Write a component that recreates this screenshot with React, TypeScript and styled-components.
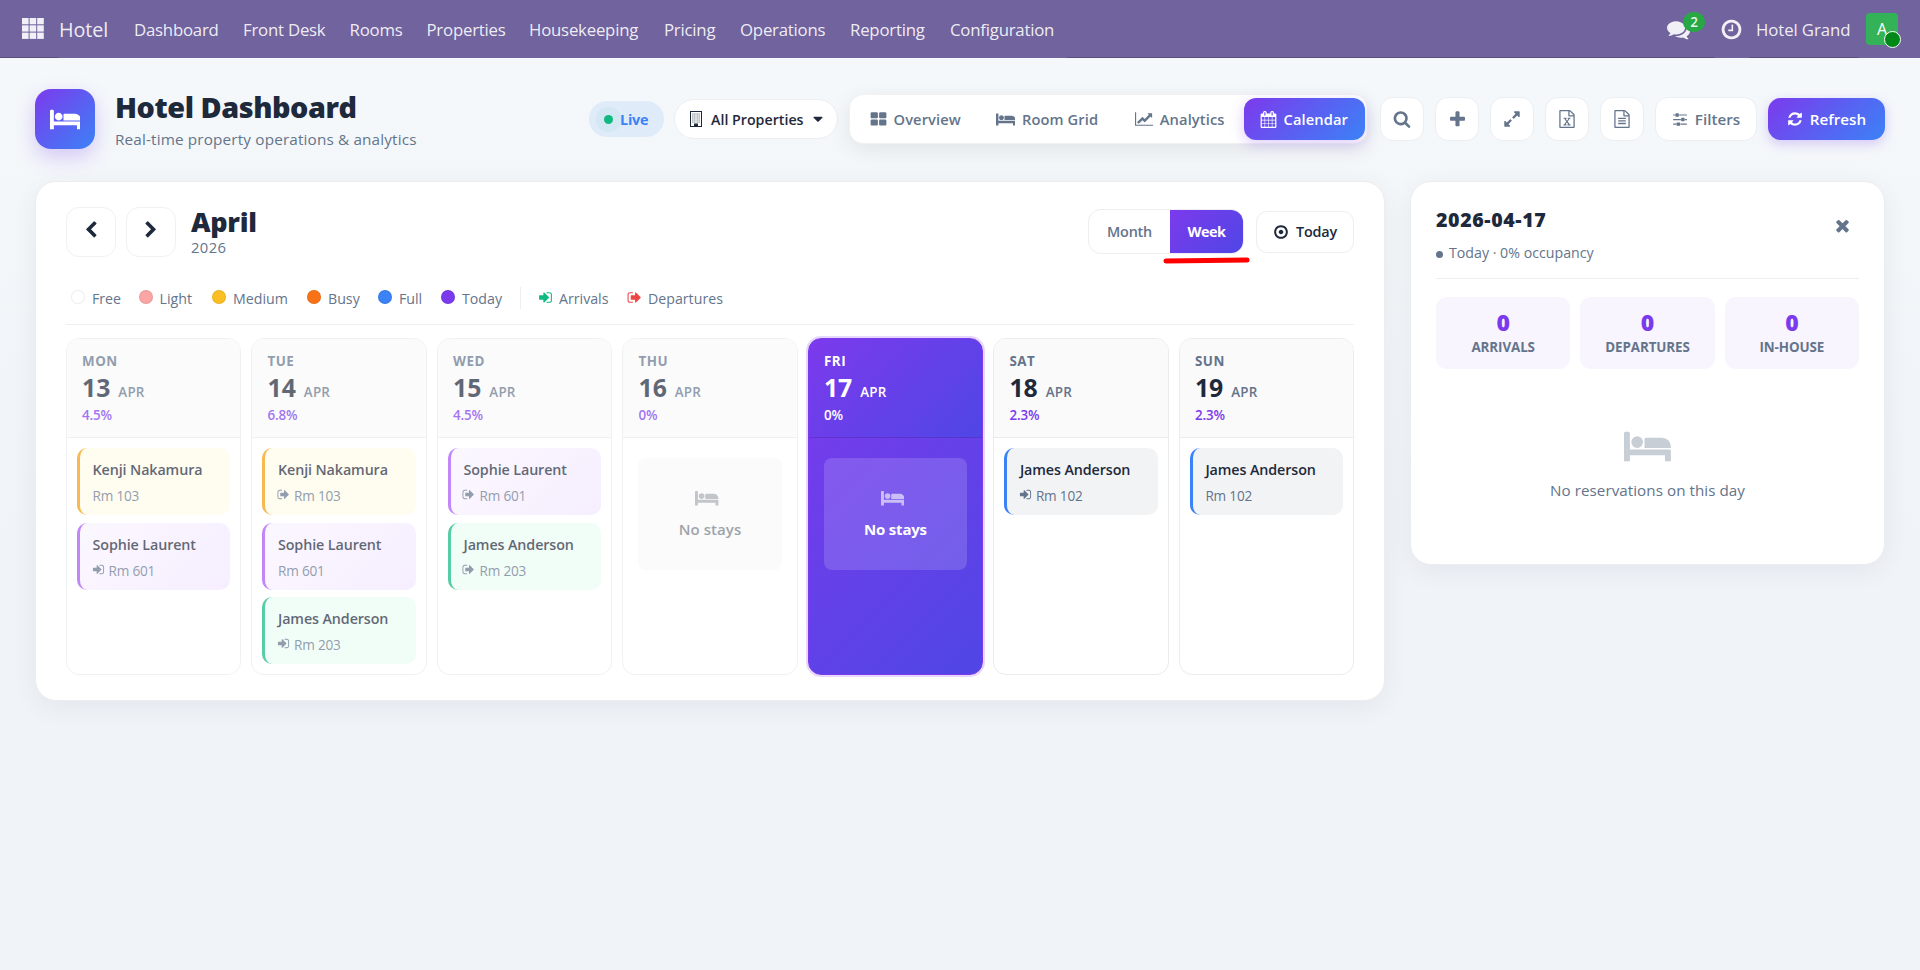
import React, { useState } from 'react';
import styled, { createGlobalStyle, css } from 'styled-components';

/* ---------- icons ---------- */

const filePage =
  'M1596 380q28 28 48 76t20 88v1152q0 40-28 68t-68 28h-1344q-40 0-68-28t-28-68v-1600q0-40 28-68t68-28h896q40 0 88 20t76 48zm-444-244v376h376q-10-29-22-41l-313-313q-12-12-41-22zm384 1528v-1024h-416q-40 0-68-28t-28-68v-416h-768v1536h1280z';

const icons = {
  bed: 'M256 1024h1728q26 0 45 19t19 45v448h-256v-256h-1536v256h-256v-1216q0-26 19-45t45-19h128q26 0 45 19t19 45v704zm576-320q0-106-75-181t-181-75-181 75-75 181 75 181 181 75 181-75 75-181zm1216 256v-64q0-159-112.5-271.5t-271.5-112.5h-704q-26 0-45 19t-19 45v384h1152z',
  search: 'M1216 832q0-185-131.5-316.5t-316.5-131.5-316.5 131.5-131.5 316.5 131.5 316.5 316.5 131.5 316.5-131.5 131.5-316.5zm512 832q0 52-38 90t-90 38q-54 0-90-38l-343-342q-179 124-399 124-143 0-273.5-55.5t-225-150-150-225-55.5-273.5 55.5-273.5 150-225 225-150 273.5-55.5 273.5 55.5 225 150 150 225 55.5 273.5q0 220-124 399l343 343q37 37 37 90z',
  plus: 'M1600 736v192q0 40-28 68t-68 28h-416v416q0 40-28 68t-68 28h-192q-40 0-68-28t-28-68v-416h-416q-40 0-68-28t-28-68v-192q0-40 28-68t68-28h416v-416q0-40 28-68t68-28h192q40 0 68 28t28 68v416h416q40 0 68 28t28 68z',
  expand: 'M883 1056q0 13-10 23l-332 332 144 144q19 19 19 45t-19 45-45 19h-448q-26 0-45-19t-19-45v-448q0-26 19-45t45-19 45 19l144 144 332-332q10-10 23-10t23 10l114 114q10 10 10 23zm781-864v448q0 26-19 45t-45 19-45-19l-144-144-332 332q-10 10-23 10t-23-10l-114-114q-10-10-10-23t10-23l332-332-144-144q-19-19-19-45t19-45 45-19h448q26 0 45 19t19 45z',
  refresh: 'M1639 1056q0 5-1 7-64 268-268 434.5t-478 166.5q-146 0-282.5-55t-243.5-157l-129 129q-19 19-45 19t-45-19-19-45v-448q0-26 19-45t45-19h448q26 0 45 19t19 45-19 45l-137 137q71 66 161 102t187 36q134 0 250-65t186-179q11-17 53-117 8-23 30-23h192q13 0 22.5 9.5t9.5 22.5zm25-800v448q0 26-19 45t-45 19h-448q-26 0-45-19t-19-45 19-45l138-138q-148-137-349-137-134 0-250 65t-186 179q-11 17-53 117-8 23-30 23h-199q-13 0-22.5-9.5t-9.5-22.5v-7q65-268 270-434.5t480-166.5q146 0 284 55.5t245 156.5l130-129q19-19 45-19t45 19 19 45z',
  sliders: 'M480 1408v128h-352v-128h352zm352-128q26 0 45 19t19 45v256q0 26-19 45t-45 19h-256q-26 0-45-19t-19-45v-256q0-26 19-45t45-19h256zm160-384v128h-864v-128h864zm-640-512v128h-224v-128h224zm1312 1024v128h-736v-128h736zm-960-1152q26 0 45 19t19 45v256q0 26-19 45t-45 19h-256q-26 0-45-19t-19-45v-256q0-26 19-45t45-19h256zm640 512q26 0 45 19t19 45v256q0 26-19 45t-45 19h-256q-26 0-45-19t-19-45v-256q0-26 19-45t45-19h256zm320 128v128h-224v-128h224zm0-512v128h-864v-128h864z',
  close: 'M1490 1322q0 40-28 68l-136 136q-28 28-68 28t-68-28l-294-294-294 294q-28 28-68 28t-68-28l-136-136q-28-28-28-68t28-68l294-294-294-294q-28-28-28-68t28-68l136-136q28-28 68-28t68 28l294 294 294-294q28-28 68-28t68 28l136 136q28 28 28 68t-28 68l-294 294 294 294q28 28 28 68z',
  left: 'M1427 301l-531 531 531 531q19 19 19 45t-19 45l-166 166q-19 19-45 19t-45-19l-742-742q-19-19-19-45t19-45l742-742q19-19 45-19t45 19l166 166q19 19 19 45t-19 45z',
  right: 'M1363 877l-742 742q-19 19-45 19t-45-19l-166-166q-19-19-19-45t19-45l531-531-531-531q-19-19-19-45t19-45l166-166q19-19 45-19t45 19l742 742q19 19 19 45t-19 45z',
  caret: 'M1408 704q0 26-19 45l-448 448q-19 19-45 19t-45-19l-448-448q-19-19-19-45t19-45 45-19h896q26 0 45 19t19 45z',
  target: 'M1152 896q0 106-75 181t-181 75-181-75-75-181 75-181 181-75 181 75 75 181zm-256-544q-148 0-273 73t-198 198-73 273 73 273 198 198 273 73 273-73 198-198 73-273-73-273-198-198-273-73zm768 544q0 209-103 385.5t-279.5 279.5-385.5 103-385.5-103-279.5-279.5-103-385.5 103-385.5 279.5-279.5 385.5-103 385.5 103 279.5 279.5 103 385.5z',
  clock: 'M1024 544v448q0 14-9 23t-23 9h-320q-14 0-23-9t-9-23v-64q0-14 9-23t23-9h224v-352q0-14 9-23t23-9h64q14 0 23 9t9 23zm416 352q0-148-73-273t-198-198-273-73-273 73-198 198-73 273 73 273 198 198 273 73 273-73 198-198 73-273zm224 0q0 209-103 385.5t-279.5 279.5-385.5 103-385.5-103-279.5-279.5-103-385.5 103-385.5 279.5-279.5 385.5-103 385.5 103 279.5 279.5 103 385.5z',
  comments: 'M1408 768q0 139-94 257t-256.5 186.5-353.5 68.5q-86 0-176-16-124 88-278 128-36 9-86 16h-3q-11 0-20.5-8t-11.5-21q-1-3-1-6.5t.5-6.5 2-6l2.5-5 3.5-5.5 4-5 4.5-5 4-4.5q5-6 23-25t26-29.5 22.5-29 25-38.5 20.5-44q-124-72-195-177t-71-224q0-139 94-257t256.5-186.5 353.5-68.5 353.5 68.5 256.5 186.5 94 257zm384 256q0 120-71 224.5t-195 176.5q10 24 20.5 44t25 38.5 22.5 29 26 29.5 23 25q1 1 4 4.5t4.5 5 4 5 3.5 5.5l2.5 5 2 6 .5 6.5-1 6.5q-3 14-13 22t-22 7q-50-7-86-16-154-40-278-128-90 16-176 16-271 0-472-132 58 4 88 4 161 0 309-45t264-129q125-92 192-212t67-254q0-77-23-152 129 71 204 178t75 230z',
  chart: 'M2048 1536v128h-2048v-1536h128v1408h1920zm-128-1248v435q0 21-19.5 29.5t-35.5-7.5l-121-121-633 633q-10 10-23 10t-23-10l-233-233-416 416-192-192 585-585q10-10 23-10t23 10l233 233 464-464-121-121q-16-16-7.5-35.5t29.5-19.5h435q14 0 23 9t9 23z',
  calendar: 'M192 1664h288v-288h-288v288zm352 0h320v-288h-320v288zm-352-352h288v-320h-288v320zm352 0h320v-320h-320v320zm-352-384h288v-288h-288v288zm736 736h320v-288h-320v288zm-384-736h320v-288h-320v288zm768 736h288v-288h-288v288zm-384-352h320v-320h-320v320zm-352-864v-288q0-13-9.5-22.5t-22.5-9.5h-64q-13 0-22.5 9.5t-9.5 22.5v288q0 13 9.5 22.5t22.5 9.5h64q13 0 22.5-9.5t9.5-22.5zm736 864h288v-320h-288v320zm-384-384h320v-288h-320v288zm384 0h288v-288h-288v288zm32-480v-288q0-13-9.5-22.5t-22.5-9.5h-64q-13 0-22.5 9.5t-9.5 22.5v288q0 13 9.5 22.5t22.5 9.5h64q13 0 22.5-9.5t9.5-22.5zm384-64v1280q0 52-38 90t-90 38h-1408q-52 0-90-38t-38-90v-1280q0-52 38-90t90-38h128v-96q0-66 47-113t113-47h64q66 0 113 47t47 113v96h384v-96q0-66 47-113t113-47h64q66 0 113 47t47 113v96h128q52 0 90 38t38 90z',
  grid: 'M832 1024v384q0 52-38 90t-90 38h-512q-52 0-90-38t-38-90v-384q0-52 38-90t90-38h512q52 0 90 38t38 90zm0-768v384q0 52-38 90t-90 38h-512q-52 0-90-38t-38-90v-384q0-52 38-90t90-38h512q52 0 90 38t38 90zm896 768v384q0 52-38 90t-90 38h-512q-52 0-90-38t-38-90v-384q0-52 38-90t90-38h512q52 0 90 38t38 90zm0-768v384q0 52-38 90t-90 38h-512q-52 0-90-38t-38-90v-384q0-52 38-90t90-38h512q52 0 90 38t38 90z',
  fileText: filePage + 'M512 800q0-14 9-23t23-9h704q14 0 23 9t9 23v64q0 14-9 23t-23 9h-704q-14 0-23-9t-9-23v-64zm736 224q14 0 23 9t9 23v64q0 14-9 23t-23 9h-704q-14 0-23-9t-9-23v-64q0-14 9-23t23-9h704zm0 256q14 0 23 9t9 23v64q0 14-9 23t-23 9h-704q-14 0-23-9t-9-23v-64q0-14 9-23t23-9h704z',
  fileExcel: filePage + 'M557 1430v106h281v-106h-75l103-161q5-7 10-16.5t7.5-13.5 3.5-4h2q1 4 5 10 2 4 4.5 7.5t6 8 6.5 8.5l107 161h-76v106h291v-106h-68l-192-273 195-282h67v-107h-279v107h74l-103 159q-4 7-10 16.5t-9 13.5l-2 3h-2q-1-4-5-10-6-11-17-23l-106-159h76v-107h-290v107h68l189 272-194 283h-68z',
  signIn: 'M1312 896q0 26-19 45l-544 544q-19 19-45 19t-45-19-19-45v-288h-448q-26 0-45-19t-19-45v-384q0-26 19-45t45-19h448v-288q0-26 19-45t45-19 45 19l544 544q19 19 19 45zm352-352v704q0 119-84.5 203.5t-203.5 84.5h-320q-13 0-22.5-9.5t-9.5-22.5q0-4-1-20t-.5-26.5 3-23.5 10-19.5 20.5-6.5h320q66 0 113-47t47-113v-704q0-66-47-113t-113-47h-312l-11.5-1-11.5-3-8-5.5-7-9-2-13.5q0-4-1-20t-.5-26.5 3-23.5 10-19.5 20.5-6.5h320q119 0 203.5 84.5t84.5 203.5z',
  signOut: 'M704 1440q0 4 1 20t.5 26.5-3 23.5-10 19.5-20.5 6.5h-320q-119 0-203.5-84.5t-84.5-203.5v-704q0-119 84.5-203.5t203.5-84.5h320q13 0 22.5 9.5t9.5 22.5q0 4 1 20t.5 26.5-3 23.5-10 19.5-20.5 6.5h-320q-66 0-113 47t-47 113v704q0 66 47 113t113 47h312l11.5 1 11.5 3 8 5.5 7 9 2 13.5zm928-544q0 26-19 45l-544 544q-19 19-45 19t-45-19-19-45v-288h-448q-26 0-45-19t-19-45v-384q0-26 19-45t45-19h448v-288q0-26 19-45t45-19 45 19l544 544q19 19 19 45z',
};

type IconName = keyof typeof icons;

const IconSvg = styled.svg`
  display: block;
  flex: none;
  fill: currentColor;
`;

const Icon: React.FC<{ name: IconName; size: number }> = ({ name, size }) => {
  const wide = name === 'bed' || name === 'chart';
  const w = wide ? 2048 : 1792;

  return (
    <IconSvg width={(size * w) / 1792} height={size} viewBox={`0 0 ${w} 1792`}>
      <path d={icons[name]} />
    </IconSvg>
  );
};

const BuildingIcon: React.FC = () => (
  <IconSvg width="12" height="16" viewBox="0 0 12 16">
    <path fillRule="evenodd" d="M0 0h12v16H0zM1 1v14h3v-2.5h4V15h3V1z" />
    {[2.5, 4.5, 6.5, 8.5, 10.5].map((y) =>
      [2.3, 4.3, 6.6, 8.6].map((x) => <rect key={`${x}-${y}`} x={x} y={y} width="1.1" height="1.1" opacity="0.7" />)
    )}
  </IconSvg>
);

const AppsIcon: React.FC = () => (
  <IconSvg width="22" height="21" viewBox="0 0 22 21">
    {[0, 7.3, 14.6].map((y) =>
      [0, 7.6, 15.2].map((x) => <rect key={`${x}-${y}`} x={x} y={y} width="6.6" height="6.3" />)
    )}
  </IconSvg>
);

/* ---------- base ---------- */

const GlobalStyle = createGlobalStyle`
  * { box-sizing: border-box; }
  body {
    margin: 0;
    height: 970px;
    overflow: hidden;
    color: #1e293b;
    font-family: "Segoe UI", "Open Sans", "Noto Sans", sans-serif;
    font-size: 14px;
  }
  button { font: inherit; border: 0; padding: 0; background: none; color: inherit; }
  h1, h2, h3 { margin: 0; }
`;

const accent = 'linear-gradient(135deg, #7c3aed 0%, #3b82f6 100%)';
const todayFill = 'linear-gradient(135deg, #7c3aed 0%, #4f46e5 100%)';

const Page = styled.div`
  height: 970px;
  background: linear-gradient(180deg, #f5f9fb 0%, #f0f3f8 55%, #f0f3f8 100%);
`;

/* ---------- navbar ---------- */

const Navbar = styled.nav`
  display: flex;
  height: 58px;
  background: linear-gradient(#71639e 57px, #5a4f7f 57px);
  color: rgba(255, 255, 255, 0.9);
  font-size: 16.8px;
`;

const AppsButton = styled.div`
  width: 58px;
  padding: 18px 0 0 22px;
`;

const NavItem = styled.a<{ $w: number }>`
  width: ${({ $w }) => $w}px;
  height: 58px;
  padding-left: 12px;
  line-height: 60px;
  background: #71639e;
  letter-spacing: -0.22px;
  white-space: nowrap;
`;

const Brand = styled(NavItem)`
  padding-left: 1px;
  font-size: 19.8px;
  letter-spacing: -0.1px;
`;

const Systray = styled.div`
  display: flex;
  margin-left: auto;
`;

const ChatButton = styled.div`
  position: relative;
  width: 47px;
  padding-top: 18px;
`;

const ChatBadge = styled.span`
  position: absolute;
  left: 16px;
  top: 12px;
  width: 22px;
  height: 20px;
  border-radius: 10px;
  background: #28a745;
  text-align: center;
  font-size: 13.5px;
  font-weight: 600;
  line-height: 21px;
`;

const ClockButton = styled.div`
  width: 35px;
  padding: 18px 0 0 6px;
  background: #71639e;
`;

const Company = styled.div`
  width: 109px;
  padding-left: 7px;
  line-height: 60px;
  letter-spacing: -0.1px;
  white-space: nowrap;
`;

const UserButton = styled.div`
  width: 62px;
  padding: 13px 0 0 8px;
  background: #71639e;
`;

const Avatar = styled.div`
  position: relative;
  width: 32px;
  height: 32px;
  border-radius: 4px;
  background: #34b257;
  color: #fff;
  text-align: center;
  line-height: 32px;
  font-size: 16px;

  &::after {
    content: '';
    position: absolute;
    right: -3px;
    bottom: -3px;
    width: 15px;
    height: 15px;
    border: 1.5px solid #fff;
    border-radius: 50%;
    background: #008818;
  }
`;

/* ---------- header ---------- */

const Main = styled.main`
  padding: 31px 35px 0;
`;

const Header = styled.header`
  display: flex;
  align-items: center;
  height: 60px;
`;

const LogoBox = styled.div`
  display: grid;
  place-items: center;
  width: 60px;
  height: 60px;
  border-radius: 16px;
  background: ${accent};
  color: #fff;
  box-shadow: 0 8px 20px rgba(124, 58, 237, 0.25);
`;

const TitleBlock = styled.div`
  margin-left: 20px;
  padding-top: 2px;
`;

const Title = styled.h1`
  font-size: 28.8px;
  line-height: 36px;
  font-weight: 800;
  letter-spacing: -0.45px;
`;

const Subtitle = styled.div`
  margin-top: 2px;
  font-size: 15.3px;
  line-height: 24px;
  letter-spacing: 0.15px;
  color: #64748b;
`;

const Controls = styled.div`
  display: flex;
  align-items: center;
  margin-left: auto;
`;

const LivePill = styled.div`
  display: flex;
  align-items: center;
  width: 75px;
  height: 36px;
  padding-left: 15px;
  border-radius: 18px;
  background: #e0ebfa;
  color: #3b82f6;
  font-weight: 700;
  font-size: 14.4px;
  letter-spacing: -0.2px;
`;

const LiveDot = styled.span`
  width: 9px;
  height: 9px;
  margin-right: 7px;
  border-radius: 50%;
  background: #10b981;
  box-shadow: 0 0 0 8px rgba(16, 185, 129, 0.06);
`;

const PropertySelect = styled.button`
  display: flex;
  align-items: center;
  gap: 9px;
  width: 164px;
  height: 40px;
  margin: 0 11px 0 10px;
  padding-left: 15px;
  border: 1px solid #eceff2;
  border-radius: 20px;
  background: #fff;
  font-weight: 600;
  font-size: 14.2px;
  letter-spacing: 0.02px;
  white-space: nowrap;

  svg:last-child {
    margin-left: -3px;
  }
`;

const Tabs = styled.div`
  display: flex;
  gap: 1px;
  width: 519px;
  height: 50px;
  padding: 3px 3px 3px 4px;
  border: 1px solid #f0f1f3;
  border-radius: 14px;
  background: #fff;
  box-shadow: 0 6px 22px rgba(0, 0, 0, 0.08);
`;

const Tab = styled.button<{ $w: number; $active?: boolean }>`
  display: flex;
  flex: none;
  align-items: center;
  gap: 6.5px;
  width: ${({ $w }) => $w}px;
  height: 42px;
  padding-left: 16px;
  border-radius: 12px;
  color: #64748b;
  font-weight: 600;
  font-size: 14.7px;
  letter-spacing: 0.1px;
  white-space: nowrap;
  ${({ $active }) =>
    $active &&
    css`
      background: ${accent};
      color: #fff;
      box-shadow: 0 4px 14px rgba(124, 58, 237, 0.25);
    `}
`;

const Actions = styled.div`
  display: flex;
  align-items: center;
  gap: 11px;
  margin-left: 12px;
`;

const ActionButton = styled.button<{ $w?: number; $primary?: boolean }>`
  display: flex;
  align-items: center;
  justify-content: center;
  gap: 7px;
  width: ${({ $w }) => $w || 44}px;
  height: 44px;
  border: 1px solid #eceff2;
  border-radius: 13px;
  background: #fff;
  color: #64748b;
  font-weight: 600;
  font-size: 15.2px;
  letter-spacing: 0;
  ${({ $primary }) =>
    $primary &&
    css`
      height: 42px;
      border: 0;
      background: ${accent};
      color: #fff;
      box-shadow: 0 4px 12px rgba(124, 58, 237, 0.25);
    `}
`;

/* ---------- calendar ---------- */

const Columns = styled.div`
  display: grid;
  grid-template-columns: 1350px 475px;
  justify-content: space-between;
  align-items: start;
  margin-top: 32px;
`;

const Card = styled.section`
  border: 1px solid #ebedef;
  border-radius: 21px;
  background: #fff;
  box-shadow: 0 6px 28px rgba(15, 23, 42, 0.06);
`;

const CalendarCard = styled(Card)`
  height: 520px;
  padding: 25px 30px 0;
`;

const CalendarHead = styled.div`
  display: flex;
  height: 50px;
`;

const StepButton = styled.button`
  display: grid;
  place-items: center;
  width: 50px;
  height: 50px;
  margin-right: 10px;
  padding-bottom: 4px;
  border: 1px solid #f0f1f3;
  border-radius: 13px;
`;

const MonthTitle = styled.div`
  margin-left: 5px;
`;

const MonthName = styled.h2`
  font-size: 27px;
  line-height: 30px;
  font-weight: 800;
  letter-spacing: -0.3px;
`;

const Year = styled.div`
  font-size: 14.8px;
  font-weight: 500;
  line-height: 20px;
  letter-spacing: 0.4px;
  color: #64748b;
`;

const HeadRight = styled.div`
  display: flex;
  align-items: center;
  margin-left: auto;
  padding-bottom: 1px;
`;

const ViewSwitch = styled.div`
  position: relative;
  display: flex;
  width: 156px;
  height: 45px;
  border: 1px solid #eceef0;
  border-radius: 13px;
`;

const ViewButton = styled.button<{ $active?: boolean }>`
  width: ${({ $active }) => ($active ? 73 : 81)}px;
  font-size: 14.4px;
  font-weight: 600;
  letter-spacing: -0.2px;
  color: #64748b;
  ${({ $active }) =>
    $active &&
    css`
      border-radius: 0 12px 12px 0;
      background: ${todayFill};
      color: #fff;
      font-weight: 700;
      letter-spacing: -0.4px;
    `}
`;

const Marker = styled.svg`
  position: absolute;
  left: 69.5px;
  top: 42px;
`;

const TodayButton = styled.button`
  display: flex;
  align-items: center;
  gap: 7px;
  width: 98px;
  height: 42px;
  margin-left: 12px;
  padding-left: 16px;
  border: 1px solid #eceef0;
  border-radius: 11px;
  font-size: 14.4px;
  font-weight: 600;
  letter-spacing: -0.2px;
`;

const Swatch = styled.i<{ $color: string }>`
  width: 14px;
  height: 14px;
  margin-bottom: 3px;
  border: 1px solid rgba(0, 0, 0, 0.07);
  border-radius: 50%;
  background: ${({ $color }) => $color};
`;

const Legend = styled.div`
  display: flex;
  align-items: center;
  height: 53px;
  margin-top: 14px;
  padding: 2px 0 0 5px;
  color: #64748b;
  font-size: 14.2px;
  font-weight: 500;
  letter-spacing: 0;
`;

const LegendItem = styled.span<{ $w: number }>`
  display: flex;
  align-items: center;
  gap: 7px;
  width: ${({ $w }) => $w}px;
  white-space: nowrap;
`;

const LegendRule = styled.i`
  width: 1px;
  height: 22px;
  margin: 0 17px 2px 0;
  background: #eceef0;
`;

const Tint = styled.span<{ $color: string }>`
  margin: 0 -1px 3px 0;
  color: ${({ $color }) => $color};
`;

const Week = styled.div`
  display: grid;
  grid-template-columns: repeat(7, 1fr);
  gap: 10.4px;
  padding-top: 13px;
  border-top: 1px solid #eceef0;
`;

const DayHead = styled.div`
  height: 99px;
  padding: 12px 15px 0;
  border-bottom: 1px solid #ececee;
  background: #fafafa;
`;

const DayName = styled.div`
  font-size: 13.4px;
  line-height: 20px;
  font-weight: 700;
  letter-spacing: 0.5px;
  color: #64748b;
`;

const DayDate = styled.div`
  display: flex;
  align-items: baseline;
  gap: 8px;
  height: 34px;
  line-height: 33px;
  font-size: 24.8px;
  font-weight: 700;
`;

const DayMonth = styled.span`
  font-size: 13.4px;
  font-weight: 600;
  letter-spacing: 0.2px;
  color: #64748b;
`;

const Occupancy = styled.div`
  font-size: 13.4px;
  line-height: 21px;
  font-weight: 600;
  letter-spacing: -0.15px;
  color: #7c3aed;
`;

const DayBody = styled.div`
  display: flex;
  flex-direction: column;
  gap: 7.6px;
  padding: 10px;
`;

const Empty = styled.div`
  display: flex;
  flex-direction: column;
  align-items: center;
  gap: 9px;
  height: 112px;
  margin: 10px 5px;
  padding-top: 30px;
  border-radius: 8px;
  background: #fafafa;
  font-size: 15px;
  line-height: 22px;
  font-weight: 600;
  letter-spacing: 0.05px;

  svg {
    margin-right: 6px;
    opacity: 0.6;
  }
`;

const Day = styled.div<{ $state: string }>`
  height: 337px;
  overflow: hidden;
  border: 1px solid #ececee;
  border-radius: 13px;
  background: #fff;
  ${({ $state }) =>
    $state === 'past' &&
    css`
      opacity: 0.7;
      ${Empty} { color: #757d87; }
    `}
  ${({ $state }) =>
    $state === 'today' &&
    css`
      border-color: #7c3aed;
      background: ${todayFill};
      color: #fff;
      box-shadow: 0 0 0 2px #e5d8fb;
      ${DayHead} { background: ${todayFill}; border-color: rgba(80, 40, 180, 0.5); }
      ${DayName}, ${DayMonth}, ${Occupancy} { color: #fff; }
      ${Empty} { background: rgba(255, 255, 255, 0.15); font-weight: 700; letter-spacing: -0.2px; }
    `}
`;

const tones = {
  yellow: ['#f59e0b', '#fffbeb'],
  purple: ['#a855f7', 'linear-gradient(135deg, #faf5ff, #f3e8ff)'],
  green: ['#10b981', '#ecfdf5'],
  blue: ['#3b82f6', '#f2f3f5'],
};

const Stay = styled.div<{ $tone: keyof typeof tones }>`
  height: 67px;
  padding: 10px 0 0 12.5px;
  border-left: 3px solid ${({ $tone }) => tones[$tone][0]};
  border-radius: 10px;
  background: ${({ $tone }) => tones[$tone][1]};
`;

const Guest = styled.div`
  font-size: 14.3px;
  line-height: 24px;
  font-weight: 600;
  letter-spacing: -0.1px;
  white-space: nowrap;
`;

const Room = styled.div`
  display: flex;
  gap: 4px;
  margin-top: 2px;
  font-size: 13.6px;
  line-height: 24px;
  letter-spacing: -0.2px;
  color: #64748b;

  svg {
    margin: 4px 0 0 -1px;
  }
`;

/* ---------- detail panel ---------- */

const Panel = styled(Card)`
  height: 384px;
  padding: 24px 25px 0;
`;

const PanelHead = styled.div`
  display: flex;
  justify-content: space-between;
  height: 73px;
  border-bottom: 1px solid #eceef0;
`;

const PanelTitle = styled.h3`
  font-size: 19.6px;
  line-height: 28px;
  font-weight: 800;
  letter-spacing: 0.6px;
`;

const PanelSub = styled.div`
  display: flex;
  align-items: center;
  gap: 6px;
  margin-top: 7px;
  font-size: 14.2px;
  line-height: 24px;
  letter-spacing: 0;
  color: #64748b;

  &::before {
    content: '';
    width: 7px;
    height: 7px;
    margin-top: 2px;
    border-radius: 50%;
    background: currentColor;
  }
`;

const CloseButton = styled.button`
  display: grid;
  align-self: flex-start;
  margin: 10px 7px 0 0;
  color: #64748b;
`;

const Stats = styled.div`
  display: grid;
  grid-template-columns: repeat(3, 1fr);
  gap: 10px;
  margin-top: 18px;
`;

const Stat = styled.div`
  height: 72px;
  padding-top: 11px;
  border-radius: 11px;
  background: #f8f5fe;
  text-align: center;
  color: #64748b;
  font-size: 13.4px;
  font-weight: 700;
  line-height: 22px;
  letter-spacing: -0.1px;
`;

const StatValue = styled.div`
  color: #7c3aed;
  font-size: 23px;
  font-weight: 800;
  line-height: 28px;
`;

const NoReservations = styled.div`
  display: flex;
  flex-direction: column;
  align-items: center;
  gap: 11px;
  padding-top: 57px;
  color: #64748b;
  font-size: 15.2px;
  line-height: 24px;
  letter-spacing: 0.05px;

  svg {
    opacity: 0.35;
  }
`;

/* ---------- data ---------- */

const menu: [string, number][] = [
  ['Dashboard', 109],
  ['Front Desk', 106.5],
  ['Rooms', 77],
  ['Properties', 102.5],
  ['Housekeeping', 135],
  ['Pricing', 76],
  ['Operations', 110],
  ['Reporting', 100],
  ['Configuration', 129],
];

const tabs: { label: string; icon: IconName; width: number; size: number }[] = [
  { label: 'Overview', icon: 'grid', width: 125, size: 17 },
  { label: 'Room Grid', icon: 'bed', width: 138, size: 17 },
  { label: 'Analytics', icon: 'chart', width: 124, size: 16 },
  { label: 'Calendar', icon: 'calendar', width: 121, size: 17 },
];

const legend: [string, string, number][] = [
  ['Free', '#fff', 67.5],
  ['Light', '#fca5a5', 73.5],
  ['Medium', '#fbbf24', 95],
  ['Busy', '#f97316', 71],
  ['Full', '#3b82f6', 63],
  ['Today', '#7c3aed', 79],
];

interface StayData {
  guest: string;
  room: number;
  tone: keyof typeof tones;
  move?: 'signIn' | 'signOut';
}

interface DayData {
  name: string;
  date: number;
  occupancy: string;
  state: string;
  stays: StayData[];
}

const days: DayData[] = [
  {
    name: 'MON', date: 13, occupancy: '4.5%', state: 'past',
    stays: [
      { guest: 'Kenji Nakamura', room: 103, tone: 'yellow' },
      { guest: 'Sophie Laurent', room: 601, tone: 'purple', move: 'signIn' },
    ],
  },
  {
    name: 'TUE', date: 14, occupancy: '6.8%', state: 'past',
    stays: [
      { guest: 'Kenji Nakamura', room: 103, tone: 'yellow', move: 'signOut' },
      { guest: 'Sophie Laurent', room: 601, tone: 'purple' },
      { guest: 'James Anderson', room: 203, tone: 'green', move: 'signIn' },
    ],
  },
  {
    name: 'WED', date: 15, occupancy: '4.5%', state: 'past',
    stays: [
      { guest: 'Sophie Laurent', room: 601, tone: 'purple', move: 'signOut' },
      { guest: 'James Anderson', room: 203, tone: 'green', move: 'signOut' },
    ],
  },
  { name: 'THU', date: 16, occupancy: '0%', state: 'past', stays: [] },
  { name: 'FRI', date: 17, occupancy: '0%', state: 'today', stays: [] },
  {
    name: 'SAT', date: 18, occupancy: '2.3%', state: 'future',
    stays: [{ guest: 'James Anderson', room: 102, tone: 'blue', move: 'signIn' }],
  },
  {
    name: 'SUN', date: 19, occupancy: '2.3%', state: 'future',
    stays: [{ guest: 'James Anderson', room: 102, tone: 'blue' }],
  },
];

/* ---------- components ---------- */

const TopNav: React.FC = () => (
  <Navbar>
    <AppsButton><AppsIcon /></AppsButton>
    <Brand $w={64}>Hotel</Brand>
    {menu.map(([label, width]) => (
      <NavItem key={label} $w={width}>{label}</NavItem>
    ))}
    <Systray>
      <ChatButton>
        <Icon name="comments" size={23} />
        <ChatBadge>2</ChatBadge>
      </ChatButton>
      <ClockButton><Icon name="clock" size={23} /></ClockButton>
      <Company>Hotel Grand</Company>
      <UserButton><Avatar>A</Avatar></UserButton>
    </Systray>
  </Navbar>
);

const DayColumn: React.FC<{ day: DayData }> = ({ day }) => (
  <Day $state={day.state}>
    <DayHead>
      <DayName>{day.name}</DayName>
      <DayDate>{day.date} <DayMonth>APR</DayMonth></DayDate>
      <Occupancy>{day.occupancy}</Occupancy>
    </DayHead>
    <DayBody>
      {day.stays.map((stay) => (
        <Stay key={stay.guest} $tone={stay.tone}>
          <Guest>{stay.guest}</Guest>
          <Room>
            {stay.move && <Icon name={stay.move} size={13} />}
            Rm {stay.room}
          </Room>
        </Stay>
      ))}
      {day.stays.length === 0 && (
        <Empty>
          <Icon name="bed" size={20.5} />
          No stays
        </Empty>
      )}
    </DayBody>
  </Day>
);

const App: React.FC = () => {
  const [tab, setTab] = useState('Calendar');
  const [view, setView] = useState('Week');

  return (
    <Page>
      <GlobalStyle />
      <TopNav />
      <Main>
        <Header>
          <LogoBox><Icon name="bed" size={27} /></LogoBox>
          <TitleBlock>
            <Title>Hotel Dashboard</Title>
            <Subtitle>Real-time property operations &amp; analytics</Subtitle>
          </TitleBlock>
          <Controls>
            <LivePill><LiveDot />Live</LivePill>
            <PropertySelect>
              <BuildingIcon />
              All Properties
              <Icon name="caret" size={16} />
            </PropertySelect>
            <Tabs>
              {tabs.map((t) => (
                <Tab key={t.label} $w={t.width} $active={tab === t.label} onClick={() => setTab(t.label)}>
                  <Icon name={t.icon} size={t.size} />
                  {t.label}
                </Tab>
              ))}
            </Tabs>
            <Actions>
              <ActionButton><Icon name="search" size={18} /></ActionButton>
              <ActionButton><Icon name="plus" size={19} /></ActionButton>
              <ActionButton><Icon name="expand" size={18} /></ActionButton>
              <ActionButton><Icon name="fileExcel" size={18} /></ActionButton>
              <ActionButton><Icon name="fileText" size={18} /></ActionButton>
              <ActionButton $w={102}><Icon name="sliders" size={16} />Filters</ActionButton>
              <ActionButton $w={117} $primary><Icon name="refresh" size={16} />Refresh</ActionButton>
            </Actions>
          </Controls>
        </Header>

        <Columns>
          <CalendarCard>
            <CalendarHead>
              <StepButton><Icon name="left" size={18} /></StepButton>
              <StepButton><Icon name="right" size={18} /></StepButton>
              <MonthTitle>
                <MonthName>April</MonthName>
                <Year>2026</Year>
              </MonthTitle>
              <HeadRight>
                <ViewSwitch>
                  {['Month', 'Week'].map((v) => (
                    <ViewButton key={v} $active={view === v} onClick={() => setView(v)}>{v}</ViewButton>
                  ))}
                  <Marker width="96" height="16" viewBox="0 0 96 16">
                    <path d="M7 9L88 8" stroke="#ff0000" strokeWidth="5" strokeLinecap="round" fill="none" />
                  </Marker>
                </ViewSwitch>
                <TodayButton><Icon name="target" size={16} />Today</TodayButton>
              </HeadRight>
            </CalendarHead>
            <Legend>
              {legend.map(([label, color, width]) => (
                <LegendItem key={label} $w={width}><Swatch $color={color} />{label}</LegendItem>
              ))}
              <LegendRule />
              <LegendItem $w={89}><Tint $color="#10b981"><Icon name="signIn" size={15} /></Tint>Arrivals</LegendItem>
              <LegendItem $w={100}><Tint $color="#ef4444"><Icon name="signOut" size={15} /></Tint>Departures</LegendItem>
            </Legend>
            <Week>
              {days.map((day) => (
                <DayColumn key={day.name} day={day} />
              ))}
            </Week>
          </CalendarCard>

          <Panel>
            <PanelHead>
              <div>
                <PanelTitle>2026-04-17</PanelTitle>
                <PanelSub>Today · 0% occupancy</PanelSub>
              </div>
              <CloseButton><Icon name="close" size={19} /></CloseButton>
            </PanelHead>
            <Stats>
              {['ARRIVALS', 'DEPARTURES', 'IN-HOUSE'].map((label) => (
                <Stat key={label}>
                  <StatValue>0</StatValue>
                  {label}
                </Stat>
              ))}
            </Stats>
            <NoReservations>
              <Icon name="bed" size={41} />
              No reservations on this day
            </NoReservations>
          </Panel>
        </Columns>
      </Main>
    </Page>
  );
};

export default App;
